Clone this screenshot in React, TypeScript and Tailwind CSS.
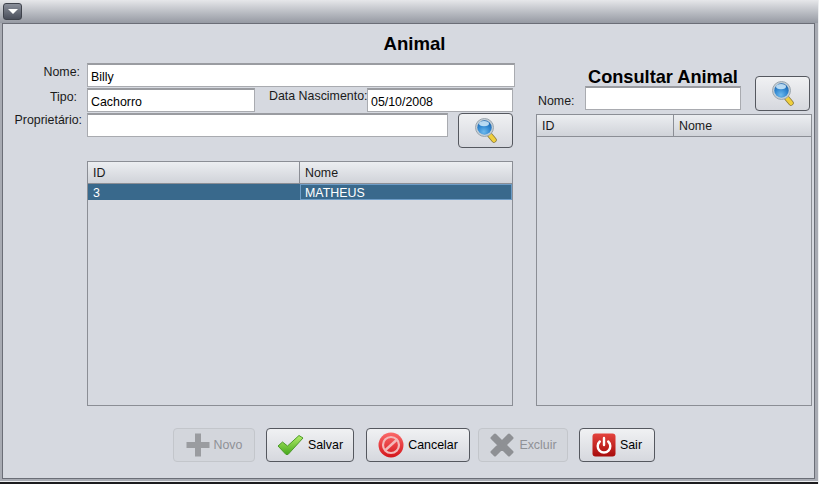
import type { ReactNode } from "react";

function SearchIcon() {
  return (
    <svg width="22" height="25" viewBox="0 0 22 25">
      <defs>
        <radialGradient id="lens" cx="45%" cy="80%" r="75%">
          <stop offset="0%" stopColor="#6db9ec" />
          <stop offset="60%" stopColor="#2f86d0" />
          <stop offset="100%" stopColor="#1f66ad" />
        </radialGradient>
      </defs>
      <path d="M13.5 15.5 L19 22" stroke="#8a7a3a" strokeWidth="5.5" strokeLinecap="round" />
      <path d="M14 16 L19 22" stroke="#f0cf3e" strokeWidth="4" strokeLinecap="round" />
      <circle cx="9.5" cy="9.5" r="9" fill="#c3ced6" stroke="#9aa6af" strokeWidth="1" />
      <circle cx="9.5" cy="9.5" r="7.2" fill="url(#lens)" />
      <ellipse cx="9" cy="5.6" rx="5" ry="2.6" fill="#d2ebfa" opacity="0.85" />
    </svg>
  );
}

function CheckIcon() {
  return (
    <svg width="27" height="22" viewBox="0 0 27 22">
      <defs>
        <linearGradient id="chk" x1="0" y1="0" x2="0" y2="1">
          <stop offset="0%" stopColor="#b4ee6a" />
          <stop offset="100%" stopColor="#46a81c" />
        </linearGradient>
      </defs>
      <path
        d="M1 12 L5.5 8 L10.5 12 L22 1.5 L26 4 L11 20.5 L9 20.5 Z"
        fill="url(#chk)"
        stroke="#4c9a2a"
        strokeWidth="1"
        strokeLinejoin="round"
      />
    </svg>
  );
}

function CancelIcon() {
  return (
    <svg width="26" height="26" viewBox="0 0 26 26">
      <defs>
        <linearGradient id="stop" x1="0" y1="0" x2="0" y2="1">
          <stop offset="0%" stopColor="#fb6a6a" />
          <stop offset="100%" stopColor="#d4141a" />
        </linearGradient>
      </defs>
      <circle cx="13" cy="13" r="12.5" fill="url(#stop)" />
      <circle cx="13" cy="13" r="8" fill="none" stroke="#f3b9b9" strokeWidth="2.2" />
      <path d="M7.5 18 L18.5 8" stroke="#f3b9b9" strokeWidth="2.4" />
    </svg>
  );
}

function PowerIcon() {
  return (
    <svg width="24" height="24" viewBox="0 0 24 24">
      <defs>
        <linearGradient id="pow" x1="0" y1="0" x2="0" y2="1">
          <stop offset="0%" stopColor="#e4443e" />
          <stop offset="100%" stopColor="#a80c0c" />
        </linearGradient>
      </defs>
      <rect x="0.5" y="0.5" width="23" height="23" rx="3" fill="url(#pow)" />
      <path d="M7.8 8.5 A6.3 6.3 0 1 0 16.2 8.5" fill="none" stroke="#fff" strokeWidth="2.4" strokeLinecap="round" />
      <path d="M12 5 L12 12" stroke="#fff" strokeWidth="2.4" strokeLinecap="round" />
    </svg>
  );
}

function PlusIcon() {
  return (
    <svg width="24" height="24" viewBox="0 0 24 24">
      <path d="M9 0.5 H15 V9 H23.5 V15 H15 V23.5 H9 V15 H0.5 V9 H9 Z" fill="#9a9ca0" />
    </svg>
  );
}

function CrossIcon() {
  return (
    <svg width="26" height="26" viewBox="0 0 26 26">
      <path d="M3 6 L6 3 L13 10 L20 3 L23 6 L16 13 L23 20 L20 23 L13 16 L6 23 L3 20 L10 13 Z" fill="#8e9094" stroke="#8e9094" strokeWidth="3" strokeLinejoin="round" />
    </svg>
  );
}

function TextField({ value, className }: { value?: string; className: string }) {
  return (
    <div
      className={`h-[24px] bg-white border border-[#a9abb0] border-t-2 border-t-[#9a9ca1] pl-[3px] text-[12.4px] leading-[24px] text-black ${className}`}
    >
      {value}
    </div>
  );
}

function ActionButton({
  icon,
  label,
  width,
  disabled,
}: {
  icon: ReactNode;
  label: string;
  width: string;
  disabled?: boolean;
}) {
  return (
    <div
      className={
        disabled
          ? `h-[34px] ${width} flex items-center justify-center gap-[4px] rounded-[4px] border border-[#c3c6cb] bg-[#d3d6dc] text-[#8f9196] text-[12.4px]`
          : `h-[34px] ${width} flex items-center justify-center gap-[4px] rounded-[4px] border border-[#55585f] bg-gradient-to-b from-[#f0f1f3] to-[#d6d8de] text-black text-[12.4px]`
      }
    >
      {icon}
      <span>{label}</span>
    </div>
  );
}

function SearchButton() {
  return (
    <div className="h-[35px] w-[55px] flex items-center justify-center rounded-[4px] border border-[#55585f] bg-gradient-to-b from-[#f0f1f3] to-[#d6d8de]">
      <SearchIcon />
    </div>
  );
}

function DataTable({
  idWidth,
  className,
  selected,
}: {
  idWidth: string;
  className: string;
  selected?: boolean;
}) {
  return (
    <div className={`border border-[#8b8e95] text-[12.4px] text-[#1a1a1a] flex flex-col ${className}`}>
      <div className="h-[22px] flex bg-gradient-to-b from-[#eceef1] to-[#d0d3d9] border-b border-[#8b8e95]">
        <div className={`${idWidth} pl-[5px] leading-[22px] border-r border-[#8b8e95]`}>ID</div>
        <div className="flex-1 pl-[5px] leading-[22px]">Nome</div>
      </div>
      {selected && (
        <div className="h-[16px] flex bg-[#39698c] text-white">
          <div className={`${idWidth} pl-[5px] leading-[18px]`}>3</div>
          <div className="flex-1 pl-[4px] leading-[16px] border border-[#6d9cc6]">MATHEUS</div>
        </div>
      )}
    </div>
  );
}

export default function App() {
  return (
    <div className="w-[819px] h-[484px] flex flex-col overflow-hidden bg-[#a8abb3] border-r border-r-[#eceef0] font-['Liberation_Sans',Arial,sans-serif]">
      {/* title bar */}
      <div className="h-[23px] shrink-0 pl-[3px] pt-[3px] bg-gradient-to-b from-[#e6e7ea] to-[#969aa3]">
        <div className="w-[19px] h-[17px] rounded-[3px] border border-[#3f434c] bg-gradient-to-b from-[#8b909b] to-[#4a4f5b] flex items-center justify-center">
          <div className="w-0 h-0 border-x-[5px] border-x-transparent border-t-[5px] border-t-white" />
        </div>
      </div>

      {/* frame */}
      <div className="w-[813px] h-[456px] ml-[2px] border border-[#6b6e77] bg-[#d6d9e0] flex flex-col">
        <div className="h-[39px] pt-[8px] text-center text-[18.6px] leading-[24px] font-bold text-black pl-[12px]">Animal</div>

        <div className="flex pl-[84px]">
          {/* left column */}
          <div className="w-[428px] relative">
            <div className="flex flex-col gap-[1px]">
              <TextField value="Billy" className="w-[428px]" />
              <div className="flex">
                <TextField value="Cachorro" className="w-[168px]" />
                <span className="ml-[14px] w-[98px] text-[12.4px] leading-[16px] text-[#1a1a1a] whitespace-nowrap">Data Nascimento:</span>
                <TextField value="05/10/2008" className="w-[146px]" />
              </div>
              <div className="flex gap-[10px] items-start">
                <TextField className="w-[361px]" />
                <SearchButton />
              </div>
            </div>
            <DataTable idWidth="w-[212px]" className="w-[426px] h-[245px] mt-[13px]" selected />
            {/* labels sit out in the left margin */}
            <span className="absolute right-[435px] top-[0px] text-[12.4px] text-[#1a1a1a]">Nome:</span>
            <span className="absolute right-[438px] top-[25px] text-[12.4px] text-[#1a1a1a]">Tipo:</span>
            <span className="absolute right-[433px] top-[48px] text-[12.4px] text-[#1a1a1a] whitespace-nowrap">Proprietário:</span>
          </div>

          {/* right column */}
          <div className="w-[276px] ml-[21px]">
            <div className="flex h-[51px] relative">
              <div className="absolute left-[52px] top-[3px] text-[18.2px] leading-[22px] font-bold text-black whitespace-nowrap">Consultar Animal</div>
              <span className="pl-[2px] pt-[29px] w-[49px] text-[12.4px] text-[#1a1a1a]">Nome:</span>
              <TextField className="w-[156px] mt-[23px]" />
              <div className="ml-[14px] mt-[13px]">
                <SearchButton />
              </div>
            </div>
            <DataTable idWidth="w-[137px]" className="w-[276px] h-[292px]" />
          </div>
        </div>

        <div className="flex justify-start pl-[170px] mt-[22px]">
          <ActionButton icon={<PlusIcon />} label="Novo" width="w-[82px]" disabled />
          <div className="ml-[11px]">
            <ActionButton icon={<CheckIcon />} label="Salvar" width="w-[88px]" />
          </div>
          <div className="ml-[12px]">
            <ActionButton icon={<CancelIcon />} label="Cancelar" width="w-[104px]" />
          </div>
          <div className="ml-[8px]">
            <ActionButton icon={<CrossIcon />} label="Excluir" width="w-[90px]" disabled />
          </div>
          <div className="ml-[11px]">
            <ActionButton icon={<PowerIcon />} label="Sair" width="w-[76px]" />
          </div>
        </div>
      </div>
      {/* window edge */}
      <div className="mt-auto h-[1px] bg-[#eceef0]" />
      <div className="h-[2px] bg-[#1c1c1e]" />
    </div>
  );
}
